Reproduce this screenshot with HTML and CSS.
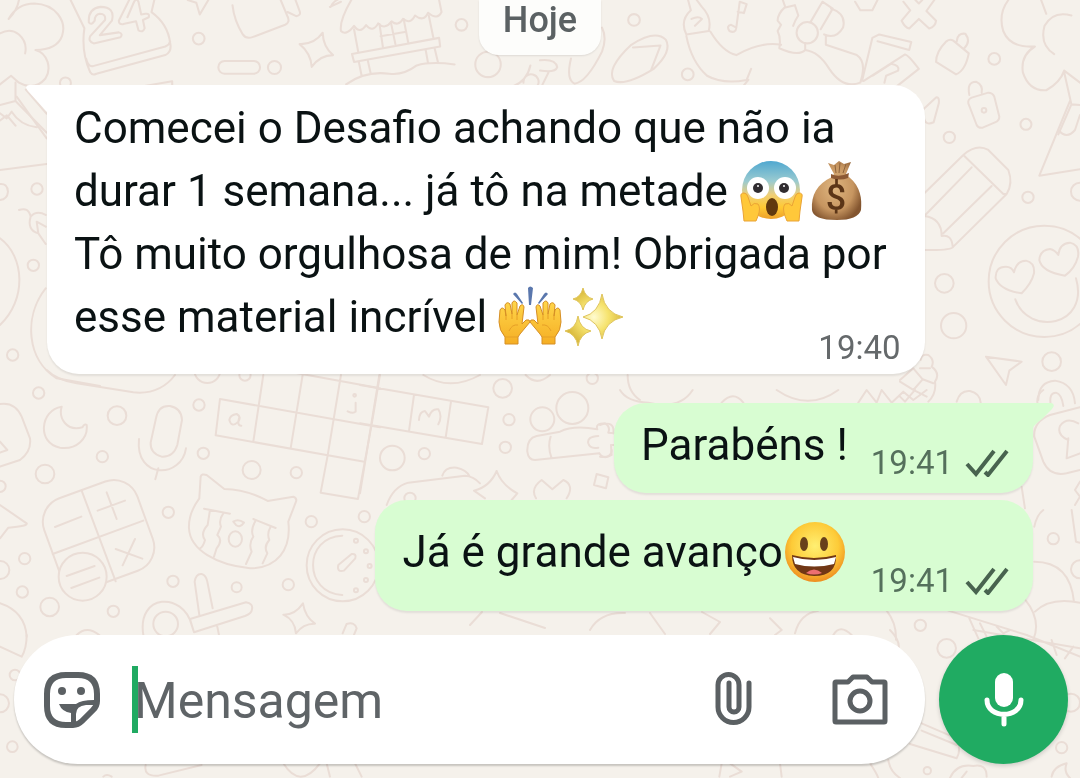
FILE: index.html
```html
<!DOCTYPE html>
<html lang="pt-BR">
<head>
<meta charset="utf-8">
<meta name="viewport" content="width=device-width, initial-scale=1">
<title>Conversa</title>
<link rel="stylesheet" href="styles.css">
</head>
<body>
<svg class="wallpaper" viewBox="0 0 1080 778" preserveAspectRatio="xMinYMin slice" aria-hidden="true">
  <g transform="scale(.3444)">
    <path d="M55 0Q50 30 25 55Q50 10 100 10C160 12 195 60 180 105Q165 145 103 145C140 155 150 200 132 228Q100 265 55 240L32 220L0 245M0 97Q30 80 55 100Q80 122 73 155M45 240V293L0 305M45 293L135 385M0 350L20 335L45 365"/>
    <path d="M205 0L245 82Q235 150 262 210Q268 220 280 214L480 160Q500 150 494 125Q488 70 440 35L448 0M250 170Q255 195 270 192L480 135Q492 130 494 120"/>
    <path d="M258 65Q255 25 292 20Q335 20 325 60L290 102L345 94Q358 98 350 108L272 126Q255 120 262 105L305 58Q308 40 290 40Q275 42 275 60Q265 75 258 65ZM375 0L345 60Q345 72 358 70L395 62L402 88Q415 96 420 82L415 58L432 50Q435 38 422 40L410 42L402 5Q395 -8 388 8L370 50"/>
    <circle cx="577" cy="112" r="17"/><circle cx="797" cy="196" r="19"/><circle cx="190" cy="241" r="16"/><circle cx="1340" cy="72" r="17"/><circle cx="1417" cy="187" r="37"/>
    <path d="M545 0L570 8L580 42L605 0M675 15Q680 60 705 100Q715 115 735 107L828 72Q843 65 835 48L815 0M835 35L860 47Q875 45 870 32L858 0"/>
    <rect x="634" y="177" width="121" height="37" rx="18"/>
    <path d="M937 95Q938 135 967 160Q930 160 905 194Q903 155 870 128Q912 130 937 95ZM960 20Q970 0 990 -5M958 20L990 5M1020 0Q985 60 990 90Q1005 105 1028 75Q1045 100 1063 73Q1082 96 1098 68Q1118 88 1137 62Q1156 78 1170 55Q1192 72 1205 45Q1230 65 1243 37Q1270 60 1282 35L1275 0"/>
    <path d="M1028 85L1040 150M1102 70L1112 138M1135 65L1148 128M1172 55L1185 122M1245 45L1258 108M1105 105L1175 93M1022 157L1275 110L1278 135L1028 180ZM1042 180L1050 220M1068 176L1076 212M1236 145L1243 184M1262 140L1272 182M1005 245Q1060 205 1130 214Q1170 220 1210 190Q1250 178 1320 187M420 250L500 236V252M1490 250Q1530 235 1540 190M1520 240A22 22 0 1 1 1560 250M75 260L135 330"/>
  </g>
  <g transform="translate(540) scale(.3444)">
    <circle cx="273" cy="58" r="17"/><circle cx="429" cy="216" r="17"/><circle cx="1319" cy="171" r="17"/><circle cx="1411" cy="361" r="16"/><circle cx="776" cy="95" r="31"/>
    <path d="M0 175Q45 170 50 195Q45 212 0 205M25 210L5 250M90 170Q75 230 100 243Q135 240 180 150Q195 110 180 80M215 235Q190 200 265 130Q335 85 365 115Q385 150 330 200Q250 250 215 235ZM270 138L350 132L322 205"/>
    <path d="M430 0L438 30Q405 60 425 100L490 90Q500 50 470 20L455 0M440 55Q460 45 470 55L450 75M425 105Q440 180 485 220Q530 245 600 232L613 200M605 232L590 250M495 92Q530 150 570 160Q640 120 700 130"/>
    <path d="M550 90Q540 75 555 72L570 80L580 5L600 12L592 38L574 34M570 80Q568 98 550 90M705 0L712 20Q690 40 690 60L700 72L690 90Q700 110 695 140Q750 165 770 145V125M712 22L740 15L750 45Q740 60 735 75M785 65L820 5L850 25L815 85M845 25Q890 40 880 80Q860 115 825 100M770 145Q810 150 840 200Q880 260 930 240Q950 180 920 160Q860 140 830 130V105"/>
    <path d="M935 235L965 110L985 100L1078 122L1072 145L980 120M940 235L1060 158Q1070 160 1100 200L1030 255M965 220L1020 185Q1045 190 1040 205L1005 220L1000 240"/>
    <path d="M915 5L930 30H965L980 0M1055 5L1075 30L1050 60Q1060 80 1072 83L1100 55L1130 83Q1148 78 1150 60L1122 32L1145 0M1090 0L1100 10L1110 0M1180 120Q1190 112 1200 118L1245 155Q1235 205 1208 216L1150 180Q1150 150 1180 120ZM1210 120Q1212 95 1235 98Q1252 120 1232 140"/>
    <path d="M1360 0Q1330 40 1345 90Q1365 140 1437 135M1543 45Q1490 30 1465 75Q1450 130 1493 157M1437 135Q1395 160 1402 210Q1420 265 1470 262Q1510 240 1522 205L1568 240M1455 0L1470 40M1522 210L1543 303L1568 305M1543 303L1505 390M1110 320L1150 283Q1160 280 1158 300L1143 355Q1120 365 1115 345"/>
  </g>
  <g transform="translate(900 60) scale(.3333)">
    <path d="M208 105Q200 65 228 65Q250 75 245 98M215 113L265 98Q278 98 283 110L298 170Q298 182 285 187L248 203Q235 205 230 195L205 130Q203 118 215 113ZM73 400L190 285Q230 250 265 270L325 330Q340 370 320 402L160 560Q155 572 73 570M190 285L310 402L320 402M215 322L73 468M275 378L130 520M73 468Q125 475 125 528Q155 522 158 560"/>
    <circle cx="252" cy="151" r="7"/><circle cx="148" cy="232" r="17"/><circle cx="384" cy="412" r="17"/><circle cx="133" cy="670" r="28"/><circle cx="161" cy="797" r="38"/><circle cx="455" cy="905" r="28"/><circle cx="540" cy="395" r="27"/><circle cx="433" cy="664" r="167"/>
    <path d="M510 123L418 347L540 328M475 210Q500 240 525 210L540 165M365 700Q300 690 287 655Q285 620 318 620Q335 620 342 637Q350 602 378 602Q405 608 402 640Q395 670 365 700ZM495 647Q425 635 418 600Q420 570 450 567Q465 570 475 585Q478 550 510 548Q540 555 534 590Q525 625 495 647ZM346 718C385 830 570 800 528 655M258 890L365 905L328 932L318 975ZM170 1025Q180 990 210 993Q240 1000 242 1028M415 1020Q415 965 465 962Q520 970 525 1030M453 1040Q445 998 468 998Q485 1002 490 1038M62 900Q65 880 85 885Q105 900 95 920Q122 940 105 965Q110 1000 85 1025M0 960L40 925L68 958L40 990L0 965M40 990L80 1010M68 958L100 970M60 925L90 925M0 1010L15 1025L45 990"/>
  </g>
  <g transform="translate(0 70) scale(.3333)">
    <path d="M50 80L140 205M0 300L140 282M0 130L20 145L35 125Q60 165 110 172M0 505C75 560 80 690 0 765M57 420Q85 410 92 440Q110 420 137 435M92 440Q80 480 115 490L137 522M115 490L110 455L137 470M137 655C70 740 80 870 170 925L300 948M0 342Q22 340 24 365Q22 388 0 390"/>
    <circle cx="111" cy="357" r="17"/><circle cx="100" cy="586" r="17"/><circle cx="38" cy="855" r="17"/>
  </g>
  <g transform="translate(0 370) scale(.3333)">
    <circle cx="116" cy="69" r="17"/><circle cx="351" cy="137" r="28"/><circle cx="597" cy="105" r="17"/><circle cx="307" cy="260" r="17"/><circle cx="135" cy="312" r="28"/><circle cx="610" cy="250" r="17"/><circle cx="755" cy="300" r="27"/><circle cx="889" cy="308" r="17"/><circle cx="505" cy="427" r="17"/><circle cx="934" cy="455" r="17"/><circle cx="1093" cy="440" r="17"/><circle cx="74" cy="566" r="17"/><circle cx="67" cy="666" r="17"/><circle cx="149" cy="711" r="28"/><circle cx="340" cy="724" r="17"/><circle cx="519" cy="634" r="17"/><circle cx="710" cy="652" r="15"/><circle cx="865" cy="644" r="17"/><circle cx="1" cy="600" r="27"/><circle cx="0" cy="349" r="17"/><circle cx="622" cy="0" r="39"/><circle cx="735" cy="15" r="17"/>
    <path d="M140 0Q170 30 230 40L400 67Q480 75 525 15M0 102Q45 95 65 140L90 205Q95 245 60 270L0 290M0 215L22 240L0 248M185 110C120 120 110 220 180 233C230 240 265 205 260 165Q255 160 247 172C200 185 175 145 185 110Z"/>
    <path d="M468 145Q475 105 510 108Q545 115 546 150L532 225Q520 262 485 260Q450 250 452 218ZM417 207C405 330 545 325 558 235M475 295L466 328"/>
    <path d="M660 87L1095 164L1140 172M790 15L760 215M908 15L872 235M1023 15L983 257L962 368L1074 387L1115 164L1140 15M660 87L647 196L1093 275M840 0L1140 55M688 150Q690 135 710 132Q725 140 715 155Q695 175 688 150ZM718 142Q710 168 724 167M1067 98V125Q1060 132 1043 124"/><circle cx="1064" cy="76" r="4"/>
    <rect x="147" y="351" width="297" height="285" rx="75" transform="rotate(-20 296 493)"/><path d="M245 362L347 634M158 552L430 452M165 471L244 440M293 422L375 392M320 367L350 447M347 537L427 566M405 507L368 586"/><circle class="fill" cx="248" cy="620" r="72"/><path d="M200 618L284 588M214 654L298 623M0 405L80 460Q85 468 25 473L0 505"/>
    <path d="M602 320Q605 310 620 315L673 357Q740 358 803 393L880 380Q892 385 888 395L865 455C875 540 830 595 750 595C650 585 570 540 567 475Q565 430 598 385ZM612 416L690 431M760 447L827 474M630 420L623 465Q600 490 615 510Q610 530 600 535M670 430Q655 450 663 470L652 495Q670 510 650 535L642 560M768 450Q750 480 760 500Q745 520 755 545L738 582M812 470Q800 490 808 510Q790 530 802 550L788 580M700 455Q715 445 732 458Q720 475 708 465Z"/><ellipse cx="706" cy="507" rx="20" ry="23"/>
    <circle cx="1028" cy="586" r="108"/><path d="M1027 497C910 500 910 670 1027 675M1015 585L1055 552Q1070 550 1066 565L1032 602Q1010 608 1015 585Z"/><circle cx="1068" cy="512" r="6"/><circle cx="1098" cy="544" r="6"/><circle cx="1109" cy="588" r="6"/><circle cx="1098" cy="630" r="6"/><circle cx="1068" cy="661" r="6"/>
    <path d="M0 700Q75 725 80 800M598 735L584 635Q588 610 605 612Q618 615 622 635L638 715M570 747L738 697Q760 700 756 718Q755 730 735 738L582 787M570 747L582 787M652 770L657 795M430 795C410 670 550 665 575 765L582 787M909 700Q915 740 945 761Q910 760 888 790Q885 750 850 734Q885 735 909 700ZM1028 790L1040 762Q1065 755 1070 775L1062 795M230 795Q260 765 298 795"/><circle cx="497" cy="762" r="37"/>
  </g>
  <g transform="translate(360 370) scale(.3333)">
    <path d="M58 15L0 370M0 45L385 112L366 222L0 160M162 75L147 183M273 95L257 203M177 150Q178 125 195 123L207 140Q215 115 235 118Q248 138 235 163M190 15Q270 65 360 15M80 405Q100 350 145 338L315 317Q340 318 360 340M247 317Q255 290 290 293Q320 300 328 318M410 303Q425 345 472 370L455 390M410 303Q390 350 342 362L375 385M528 385Q510 355 545 330L577 358L610 330Q645 345 620 385M502 245Q500 205 530 198L600 185Q640 165 712 178M502 245Q505 270 525 270L718 250M572 200Q562 230 575 265M712 178Q705 160 735 160Q752 170 745 188L765 190M718 250Q730 270 755 255L753 225H765M715 198Q680 200 685 220Q690 238 715 233M497 15Q530 50 570 15M803 15Q803 65 840 90M710 312L745 322L738 355L702 345Z"/>
    <circle cx="428" cy="55" r="28"/><circle cx="447" cy="149" r="17"/><circle cx="436" cy="232" r="17"/><circle cx="97" cy="264" r="37"/><circle cx="193" cy="251" r="17"/><circle cx="547" cy="148" r="36"/><circle cx="637" cy="114" r="48"/><circle cx="697" cy="25" r="17"/><circle cx="150" cy="385" r="17"/>
  </g>
  <g transform="translate(600 390) scale(.3333)">
    <path d="M60 0Q80 35 145 38Q240 60 278 0M365 38Q400 0 430 38M530 0Q625 65 715 0M775 38L800 0L830 38L845 0L875 38L910 5L940 30L980 0M1440 52L1350 75Q1300 95 1303 140L1330 215Q1350 260 1400 250L1440 240M1320 70Q1300 20 1330 0M1405 150Q1370 135 1380 108Q1400 80 1435 100M1405 145L1400 205L1440 190M1265 290L1275 355M1440 275L1425 300L1440 320L1425 345M0 105Q45 90 40 130M0 200Q35 205 35 180"/>
  </g>
  <g transform="translate(770 510) scale(.3333)">
    <circle cx="850" cy="86" r="17"/><circle cx="930" cy="178" r="27"/><circle cx="451" cy="346" r="17"/>
    <path d="M793 50Q800 15 820 0M905 0L918 95L930 98M793 155Q900 155 912 275M765 268Q815 330 790 389M930 278Q840 260 795 305M535 302L770 375M598 325L625 385M630 340L650 380M75 370Q90 310 145 302M350 302Q380 340 378 389M190 375Q210 340 245 375M0 325L35 360L15 375M680 350L700 370L720 360"/>
  </g>
  <g transform="translate(0 630) scale(.3333)">
    <circle cx="45" cy="135" r="16"/><circle cx="0" cy="220" r="27"/><circle cx="37" cy="350" r="16"/><path d="M80 15Q80 55 65 80L0 50M437 405Q430 440 475 437L605 405M850 400Q900 480 960 400M980 400L990 440M1065 400L1085 440M310 440Q320 430 335 440"/>
  </g>
  <g transform="translate(690 630) scale(.3333)">
    <circle cx="770" cy="55" r="28"/><circle cx="1115" cy="353" r="17"/><circle cx="1143" cy="218" r="27"/><circle cx="712" cy="422" r="11"/>
    <path d="M600 0Q640 40 620 75M695 280L800 325Q815 360 800 385L660 342M695 302L800 345M540 400Q560 430 565 444M595 390Q600 425 630 444M95 400L88 440M120 400L155 425L120 440M850 0L1170 55M1010 15L1170 80M1085 30L1100 75M1150 50L1125 85M1085 440Q1090 410 1130 400Q1120 425 1140 444M780 444Q800 400 850 408Q890 400 890 440M815 444L830 425M270 400L275 440"/>
  </g>
  <g>
    <path d="M590 630Q600 612 625 613M500 613L545 628M650 613L665 634M470 625L482 612M702 612L720 622L710 634"/>
  </g>
</svg>

<svg class="symbols" aria-hidden="true">
  <defs>
    <radialGradient id="face" cx=".5" cy=".4" r=".6"><stop offset="0" stop-color="#ffef72"/><stop offset=".65" stop-color="#fdcb38"/><stop offset="1" stop-color="#ee8d20"/></radialGradient>
    <linearGradient id="fear" x2="0" y2="1"><stop offset="0" stop-color="#50a8d0"/><stop offset=".35" stop-color="#9bcbd0"/><stop offset=".58" stop-color="#efcf78"/><stop offset=".8" stop-color="#ffc932"/><stop offset="1" stop-color="#eda02b"/></linearGradient>
    <radialGradient id="sack" cx=".45" cy=".45" r=".6"><stop offset="0" stop-color="#dfb680"/><stop offset=".65" stop-color="#c69560"/><stop offset="1" stop-color="#83552f"/></radialGradient>
    <linearGradient id="skin" x2="0" y2="1"><stop offset="0" stop-color="#ffd64a"/><stop offset="1" stop-color="#f5ae24"/></linearGradient>
    <radialGradient id="gold"><stop offset="0" stop-color="#fffbd0"/><stop offset=".5" stop-color="#f6e36e"/><stop offset="1" stop-color="#d9b93c"/></radialGradient>
    <symbol id="ticks" viewBox="0 0 44 28"><path d="M2 15L11 25L29 2M20 23L23 26L42 2" fill="none" stroke="currentColor" stroke-width="4"/></symbol>
  </defs>
</svg>

<div class="chat">
  <main class="messages">
    <div class="date">Hoje</div>

    <article class="bubble received">
      <svg class="tail tail-left" viewBox="0 0 22 28" aria-hidden="true"><path d="M22 0H3Q-2 1 2 6L22 28Z"/></svg>
      <p class="text">Comecei o Desafio achando que não ia durar 1 semana... já tô na metade <span class="pair"><svg class="emoji" viewBox="0 0 65 62" role="img" aria-label="rosto gritando de medo">
        <circle cx="32" cy="30" r="29" fill="url(#fear)"/>
        <circle cx="19" cy="28" r="11" fill="#fff"/><circle cx="46" cy="28" r="11" fill="#fff"/><circle cx="19" cy="28" r="5" fill="#302c30"/><circle cx="45" cy="28" r="5" fill="#302c30"/><circle cx="19" cy="26" r="1" fill="#fff"/><circle cx="45" cy="26" r="1" fill="#fff"/>
        <ellipse cx="33" cy="47" rx="6" ry="9" fill="#61390e"/>
        <path d="M2 37Q1 33 5 33Q8 33 9 37L12 46Q15 42 19 44Q22 48 19 56L17 61H5L4 51Z M63 37Q64 33 60 33Q57 33 56 37L53 46Q50 42 46 44Q43 48 46 56L48 61H60L61 51Z" fill="#ffc83a" stroke="#eaa336"/>
      </svg><svg class="emoji" viewBox="0 0 65 62" role="img" aria-label="saco de dinheiro">
        <path d="M24 3L30 5L35 1L40 4L47 2L42 14L45 17C57 27 58 39 57 50Q54 60 33 60Q9 60 8 50C7 35 13 24 28 17L30 14Z" fill="url(#sack)"/><path d="M27 14Q35 18 45 13L44 18Q36 21 27 18Z" fill="#8c5934"/><path d="M31 5L32 13M36 3L35 13M42 4L39 13" stroke="#8d633c" fill="none"/>
        <text class="dollar" x="32" y="50" text-anchor="middle">$</text>
      </svg></span> Tô muito orgulhosa de mim! Obrigada por esse material incrível <span class="pair"><svg class="emoji" viewBox="0 0 65 62" role="img" aria-label="mãos para cima">
        <g id="hand"><path d="M7 58V51Q1 44 1 36L2 24Q4 20 7 24L8 30L7 19Q9 15 12 18L14 28V17Q16 13 19 17L19 29L22 20Q25 17 26 21L24 38L28 34Q32 33 32 36L22 48L20 51V58Z" fill="url(#skin)" stroke="#d68f25" stroke-linejoin="round"/><path d="M8 30V34M14 28V33M19 29V34M11 45Q14 38 20 39M7 51H20" fill="none" stroke="#e69f27"/></g>
        <use href="#hand" transform="translate(64) scale(-1 1)"/>
        <path d="M30 2Q32 -1 35 2L33 19H31ZM15 8Q17 5 19 8L25 17L24 18ZM46 8Q48 5 50 8L41 18L40 17Z" fill="#5a77ad"/>
      </svg><svg class="emoji" viewBox="0 0 65 62" role="img" aria-label="brilhos">
        <path fill="url(#gold)" stroke="#dfc45a" d="M39 8Q42 27 60 31Q42 35 39 53Q36 35 20 31Q36 27 39 8ZM20 2Q22 11 30 13Q22 15 20 24Q18 15 10 13Q18 11 20 2ZM15 30Q17 43 28 45Q17 48 15 60Q13 48 2 45Q13 43 15 30Z"/>
      </svg></span></p>
      <time class="meta" datetime="19:40">19:40</time>
    </article>

    <article class="bubble sent first">
      <svg class="tail tail-right" viewBox="0 0 22 28" aria-hidden="true"><path d="M0 0H19Q24 1 20 6L10 16Q0 23 0 28Z"/></svg>
      <p class="text">Parabéns !</p>
      <div class="meta"><time datetime="19:41">19:41</time><svg class="ticks" role="img" aria-label="Entregue"><use href="#ticks"/></svg></div>
    </article>

    <article class="bubble sent tall">
      <p class="text">Já é grande avanço<svg class="emoji" viewBox="0 0 65 62" role="img" aria-label="rosto sorridente">
        <circle cx="32" cy="31" r="30" fill="url(#face)"/><ellipse cx="21" cy="23" rx="4" ry="7" fill="#68401b"/><ellipse cx="41" cy="23" rx="4" ry="7" fill="#68401b"/><path d="M9 34Q31 40 53 34Q54 55 31 55Q9 54 9 34Z" fill="#713715"/><path d="M10 36Q31 42 53 36L51 43Q31 48 12 43Z" fill="#fff"/><path d="M23 52Q31 45 39 52Q31 55 23 52Z" fill="#ed6f72"/>
      </svg></p>
      <div class="meta"><time datetime="19:41">19:41</time><svg class="ticks" role="img" aria-label="Entregue"><use href="#ticks"/></svg></div>
    </article>
  </main>

  <form class="composer">
    <div class="field">
      <button class="icon-button" type="button" aria-label="Figurinhas">
        <svg class="icon" viewBox="0 0 56 56"><path d="M22 3H34Q53 3 53 22V29Q53 34 49 38L38 49Q34 53 29 53H22Q3 53 3 34V22Q3 3 22 3Z" fill="none" stroke="currentColor" stroke-width="6"/><circle cx="18" cy="19" r="4" fill="currentColor"/><circle cx="37" cy="19" r="4" fill="currentColor"/><path d="M15 32H32Q37 28 50 28V33H42Q32 34 32 42V53H27V41Q18 40 15 32Z" fill="currentColor"/></svg>
      </button>
      <span class="caret" aria-hidden="true"></span>
      <input class="input" type="text" placeholder="Mensagem" aria-label="Mensagem">
      <button class="icon-button clip" type="button" aria-label="Anexar">
        <svg class="icon" viewBox="0 0 56 56"><path d="M44 11V35A15 15 0 0 1 13 35V13A10 10 0 0 1 34 13V35A5 5 0 0 1 24 35V11" fill="none" stroke="currentColor" stroke-width="5" stroke-linecap="round"/></svg>
      </button>
      <button class="icon-button" type="button" aria-label="Câmera">
        <svg class="icon" viewBox="0 0 56 56"><path d="M4 10H16L21 5H35L40 10H52Q53 10 53 11V49Q53 50 52 50H4Q3 50 3 49V11Q3 10 4 10Z" fill="none" stroke="currentColor" stroke-width="5" stroke-linejoin="round"/><circle cx="28" cy="29" r="10" fill="none" stroke="currentColor" stroke-width="5"/></svg>
      </button>
    </div>
    <button class="mic" type="button" aria-label="Gravar mensagem de voz">
      <svg class="icon" viewBox="0 0 56 56"><rect x="19" y="1" width="18" height="34" rx="9" fill="currentColor"/><path d="M11 28C11 47 45 47 45 28M28 43V52" fill="none" stroke="currentColor" stroke-width="5" stroke-linecap="round"/></svg>
    </button>
  </form>
</div>
</body>
</html>
```
FILE: styles.css
```css
* {
  box-sizing: border-box;
}

body {
  margin: 0;
  font-family: Roboto, "Liberation Sans", sans-serif;
  color: #0a1213;
  background: #f5f1eb;
}

.wallpaper {
  position: fixed;
  inset: 0;
  z-index: -1;
  width: 100%;
  height: 100%;
  fill: none;
  stroke: #eaddd6;
  stroke-width: 6;
  stroke-linecap: round;
  stroke-linejoin: round;
}

.wallpaper > g:last-child {
  stroke-width: 2;
}

.wallpaper .fill {
  fill: #f5f0ea;
}

.symbols {
  position: absolute;
  width: 0;
  height: 0;
}

.chat {
  display: flex;
  flex-direction: column;
  min-height: 100vh;
}

.messages {
  display: flex;
  flex: 1;
  flex-direction: column;
  padding: 0 47px;
}

.date {
  align-self: center;
  padding: 0 24px 15px;
  border-radius: 0 0 20px 20px;
  background: #fdfdfb;
  color: #5b6163;
  font-size: 36px;
  font-weight: 500;
  line-height: 40px;
  box-shadow: 0 1px 2px #00000018;
}

.bubble {
  position: relative;
  border-radius: 32px;
  font-size: 44px;
  line-height: 63px;
  box-shadow: 0 2px 2px #00000014;
}

.text {
  margin: 0;
}

.received {
  display: grid;
  align-self: flex-start;
  max-width: 89%;
  margin-top: 30px;
  padding: 12px 24px 6px 27px;
  border-top-left-radius: 0;
  background: #fff;
}

.received .text,
.received .meta {
  grid-area: 1 / 1;
}

.received .text {
  padding-bottom: 19px;
}

.received .meta {
  align-self: end;
  justify-self: end;
  color: #65696b;
}

.sent {
  display: flex;
  align-items: flex-end;
  align-self: flex-end;
  gap: 23px;
  margin-top: 7px;
  padding: 11px 24px 10px 27px;
  background: #d8fdd2;
}

.sent .text {
  padding-bottom: 6px;
}

.first {
  margin-top: 29px;
  border-top-right-radius: 0;
}

.tall {
  padding-top: 21px;
}

.tall .text {
  padding-bottom: 17px;
}

.meta {
  display: flex;
  gap: 12px;
  align-items: center;
  color: #55705c;
  font-size: 33px;
  line-height: 40px;
}

.ticks {
  width: 44px;
  height: 28px;
  color: #48634f;
}

.tail {
  position: absolute;
  top: 0;
  width: 22px;
  height: 28px;
}

.tail-left {
  right: 100%;
  margin-right: -1px;
  fill: #fff;
}

.tail-right {
  left: 100%;
  margin-left: -1px;
  fill: #d8fdd2;
}

.pair {
  white-space: nowrap;
}

.emoji {
  width: 65px;
  height: 62px;
  vertical-align: -16px;
}

.dollar {
  fill: #5b3517;
  font-size: 36px;
  font-weight: 500;
}

.composer {
  display: flex;
  align-items: center;
  gap: 14px;
  padding: 0 12px 14px 14px;
}

.field {
  display: flex;
  flex: 1;
  align-items: center;
  min-width: 0;
  height: 129px;
  padding: 0 37px 0 30px;
  border-radius: 64px;
  background: #fff;
  box-shadow: 0 2px 2px #00000030;
}

.icon-button,
.mic {
  display: flex;
  flex: none;
  align-items: center;
  justify-content: center;
  padding: 0;
  border: 0;
  background: none;
  color: #5b6063;
}

.icon {
  width: 56px;
  height: 56px;
}

.caret {
  flex: none;
  width: 6px;
  height: 67px;
  margin-left: 32px;
  background: #20aa62;
}

.input {
  flex: 1;
  min-width: 0;
  height: 72px;
  margin-left: -4px;
  padding: 2px 0 0;
  border: 0;
  outline: 0;
  background: none;
  color: #0a1213;
  font-family: inherit;
  font-size: 50px;
}

.input::placeholder {
  color: #5f6467;
  opacity: 1;
}

.clip {
  margin-right: 71px;
}

.mic {
  width: 129px;
  height: 129px;
  border-radius: 50%;
  background: #20ab62;
  color: #fff;
  box-shadow: 0 2px 4px #00000028;
}
```
